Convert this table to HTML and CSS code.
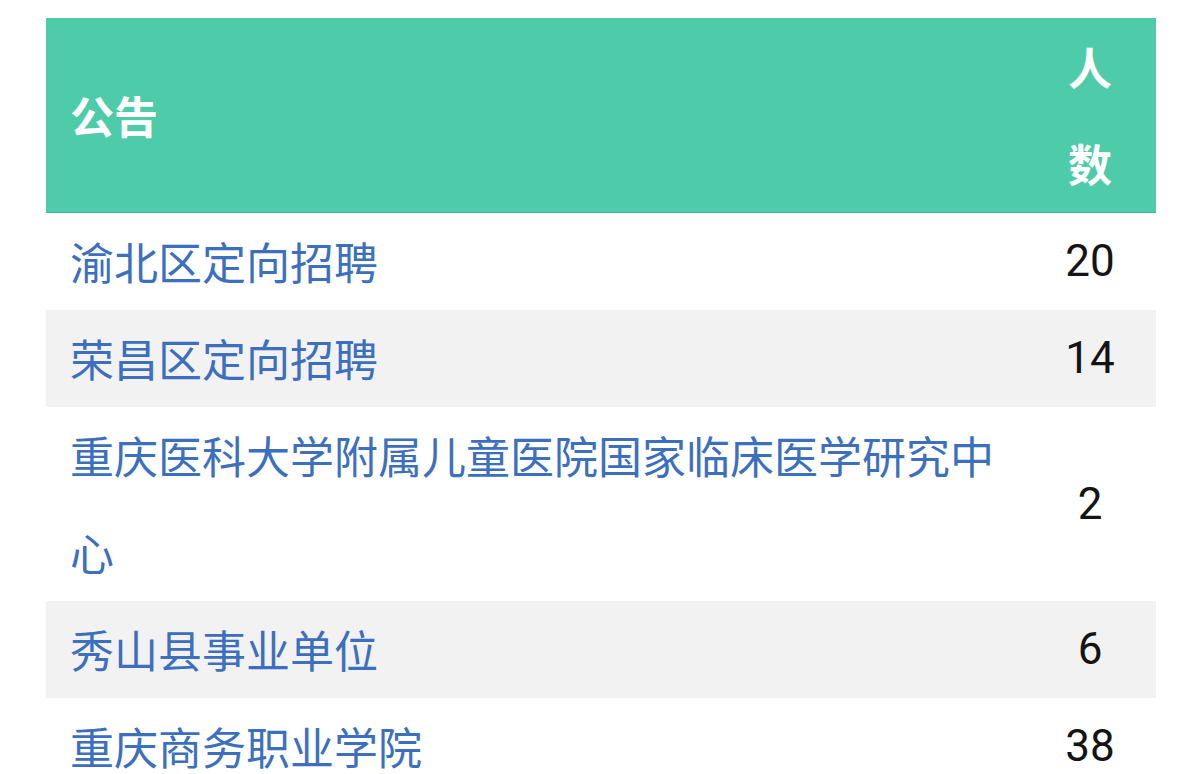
FILE: index.html
```html
<!DOCTYPE html>
<html lang="zh-CN">
<head>
<meta charset="utf-8">
<title>公告</title>
<link rel="stylesheet" href="styles.css">
</head>
<body>
<table class="list">
  <thead>
    <tr>
      <th class="name">公告</th>
      <th class="count">人数</th>
    </tr>
  </thead>
  <tbody>
    <tr><td class="name">渝北区定向招聘</td><td class="count">20</td></tr>
    <tr><td class="name">荣昌区定向招聘</td><td class="count">14</td></tr>
    <tr><td class="name">重庆医科大学附属儿童医院国家临床医学研究中心</td><td class="count">2</td></tr>
    <tr><td class="name">秀山县事业单位</td><td class="count">6</td></tr>
    <tr><td class="name">重庆商务职业学院</td><td class="count">38</td></tr>
  </tbody>
</table>
</body>
</html>
```
FILE: styles.css
```css
html, body {
  margin: 0;
  padding: 0;
  background: #ffffff;
}
body {
  padding: 18px 44px 0 46px;
  font-family: "Noto Sans CJK SC", "Noto Sans", sans-serif;
  overflow: hidden;
}
.list {
  width: 1110px;
  border-collapse: collapse;
  table-layout: fixed;
  font-size: 44px;
  line-height: 97px;
}
.list th, .list td {
  padding: 0 24px;
  vertical-align: middle;
}
.list thead th {
  background: #4ecba8;
  color: #ffffff;
  font-weight: 700;
  text-align: left;
  border-bottom: 1px solid #47b99a;
}
.list th.count {
  width: 44px;
  padding: 0 44px;
  text-align: center;
}
.list td.name {
  color: #3d6fbf;
}
.list td.count {
  color: #141414;
  text-align: center;
  font-family: Roboto, "Noto Sans", sans-serif;
  font-size: 44px;
}
.list tbody tr:nth-child(even) td {
  background: #f2f2f2;
}
```
